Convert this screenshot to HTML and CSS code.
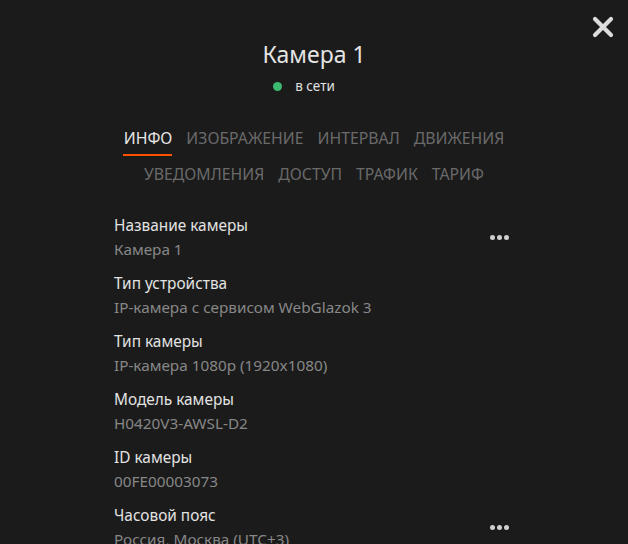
FILE: index.html
```html
<!DOCTYPE html>
<html lang="ru">
<head>
<meta charset="utf-8">
<link rel="stylesheet" href="styles.css">
</head>
<body>
<div class="page">
  <button class="close" aria-label="Закрыть">
    <svg width="22" height="22" viewBox="0 0 22 22"><path d="M3 3 L19 19 M19 3 L3 19" stroke="#dcdcdc" stroke-width="4.2" stroke-linecap="round"/></svg>
  </button>
  <header class="head">
    <h1 class="title">Камера 1</h1>
    <div class="status"><span class="dot"></span>в сети</div>
  </header>
  <nav class="tabs">
    <div class="tab-row">
      <span class="tab active">ИНФО</span>
      <span class="tab">ИЗОБРАЖЕНИЕ</span>
      <span class="tab">ИНТЕРВАЛ</span>
      <span class="tab">ДВИЖЕНИЯ</span>
    </div>
    <div class="tab-row">
      <span class="tab">УВЕДОМЛЕНИЯ</span>
      <span class="tab">ДОСТУП</span>
      <span class="tab">ТРАФИК</span>
      <span class="tab">ТАРИФ</span>
    </div>
  </nav>
  <section class="fields">
    <div class="field">
      <div class="text"><div class="label">Название камеры</div><div class="value">Камера 1</div></div>
      <span class="more"><i></i><i></i><i></i></span>
    </div>
    <div class="field">
      <div class="text"><div class="label">Тип устройства</div><div class="value">IP-камера с сервисом WebGlazok 3</div></div>
    </div>
    <div class="field">
      <div class="text"><div class="label">Тип камеры</div><div class="value">IP-камера 1080p (1920x1080)</div></div>
    </div>
    <div class="field">
      <div class="text"><div class="label">Модель камеры</div><div class="value">H0420V3-AWSL-D2</div></div>
    </div>
    <div class="field">
      <div class="text"><div class="label">ID камеры</div><div class="value">00FE00003073</div></div>
    </div>
    <div class="field">
      <div class="text"><div class="label">Часовой пояс</div><div class="value">Россия, Москва (UTC+3)</div></div>
      <span class="more"><i></i><i></i><i></i></span>
    </div>
  </section>
</div>
</body>
</html>
```
FILE: styles.css
```css
html, body {
  margin: 0;
  padding: 0;
  background: #1b1b1b;
  height: 100%;
  overflow: hidden;
}
body {
  font-family: "Noto Sans", "Open Sans", sans-serif;
  color: #e2e2e2;
}
.page {
  position: relative;
  width: 628px;
  height: 544px;
  padding-top: 38px;
  box-sizing: border-box;
}
.close {
  position: absolute;
  top: 16px;
  right: 14px;
  background: none;
  border: 0;
  padding: 0;
  width: 22px;
  height: 22px;
  display: flex;
}
.head {
  display: flex;
  flex-direction: column;
  align-items: center;
}
.title {
  margin: 0;
  font-size: 23px;
  font-weight: 400;
  line-height: 32px;
  color: #e4e4e4;
}
.status {
  display: flex;
  align-items: center;
  gap: 13px;
  margin-top: 8px;
  padding-right: 20px;
  font-size: 13.5px;
  line-height: 16px;
  color: #e0e0e0;
}
.dot {
  width: 9px;
  height: 9px;
  border-radius: 50%;
  background: #3dba6f;
}
.tabs {
  margin-top: 32px;
  display: flex;
  flex-direction: column;
  align-items: center;
  gap: 12px;
}
.tab-row {
  display: flex;
  gap: 14px;
}
.tab {
  font-size: 15.8px;
  line-height: 24px;
  color: #6a6a6a;
  position: relative;
}
.tab.active {
  color: #e6e6e6;
}
.tab.active::after {
  content: "";
  position: absolute;
  left: -1px;
  right: 0;
  bottom: -6px;
  height: 2px;
  background: #ff5000;
}
.fields {
  width: 400px;
  margin: 28px auto 0;
  display: flex;
  flex-direction: column;
  gap: 11px;
}
.field {
  display: flex;
  align-items: center;
  justify-content: space-between;
}
.text {
  display: flex;
  flex-direction: column;
  gap: 1px;
}
.label {
  font-size: 15.4px;
  line-height: 23px;
  color: #e2e2e2;
}
.value {
  font-size: 15.3px;
  line-height: 23px;
  color: #878787;
}
.more {
  display: flex;
  gap: 2px;
  margin-right: 5px;
}
.more i {
  width: 5px;
  height: 5px;
  border-radius: 50%;
  background: #cfcfcf;
}
```
